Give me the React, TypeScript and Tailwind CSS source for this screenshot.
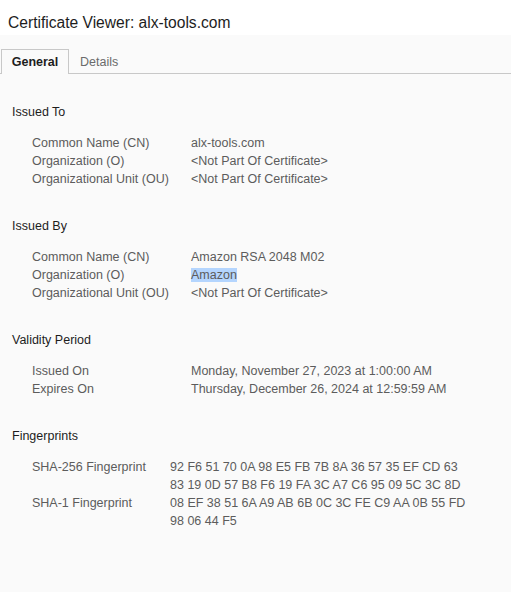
const rowsTo = [
  ['Common Name (CN)', 'alx-tools.com'],
  ['Organization (O)', '<Not Part Of Certificate>'],
  ['Organizational Unit (OU)', '<Not Part Of Certificate>'],
];

const Section = ({ title, children }: { title: string; children: React.ReactNode }) => (
  <div className="mb-[29px]">
    <div className="h-[18px] leading-[18px] text-[#1d1d1d]">{title}</div>
    <div className="mt-[13px] pl-[20px]">{children}</div>
  </div>
);

const Row = ({ label, children, wide = true }: { label: string; children: React.ReactNode; wide?: boolean }) => (
  <div className="flex leading-[18px] text-[#5c5c5c]">
    <div className={wide ? 'w-[159px] shrink-0' : 'w-[138px] shrink-0'}>{label}</div>
    <div>{children}</div>
  </div>
);

const App = () => {
  return (
    <div className="w-[511px] h-[592px] bg-[#fafafa] text-[12.5px]" style={{ fontFamily: '"Liberation Sans", Arial, sans-serif' }}>
      {/* Title */}
      <div className="h-[35px] bg-white px-[8px] pt-[14px] text-[15.6px] leading-[18px] text-[#1d1d1d]">
        Certificate Viewer: alx-tools.com
      </div>

      {/* Tabs */}
      <div className="flex items-end h-[39px] border-b border-[#c8c8c8] pl-[1px]">
        <div className="h-[25px] w-[68px] -mb-px border border-b-0 border-[#c8c8c8] bg-[#fafafa] flex items-center justify-center font-bold text-[#1d1d1d]">
          General
        </div>
        <div className="h-[25px] -mb-px border border-b-0 border-transparent px-[10px] flex items-center text-[#6b6b6b]">
          Details
        </div>
      </div>

      <div className="px-[12px] pt-[29px]">
        <Section title="Issued To">
          {rowsTo.map(([l, v]) => (
            <Row key={l} label={l}>{v}</Row>
          ))}
        </Section>

        <Section title="Issued By">
          <Row label="Common Name (CN)">Amazon RSA 2048 M02</Row>
          <Row label="Organization (O)">
            <span className="bg-[#b4d5fe]">Amazon</span>
          </Row>
          <Row label="Organizational Unit (OU)">{'<Not Part Of Certificate>'}</Row>
        </Section>

        <Section title="Validity Period">
          <Row label="Issued On">Monday, November 27, 2023 at 1:00:00 AM</Row>
          <Row label="Expires On">Thursday, December 26, 2024 at 12:59:59 AM</Row>
        </Section>

        <Section title="Fingerprints">
          <Row label="SHA-256 Fingerprint" wide={false}>
            <div>92 F6 51 70 0A 98 E5 FB 7B 8A 36 57 35 EF CD 63</div>
            <div>83 19 0D 57 B8 F6 19 FA 3C A7 C6 95 09 5C 3C 8D</div>
          </Row>
          <Row label="SHA-1 Fingerprint" wide={false}>
            <div>08 EF 38 51 6A A9 AB 6B 0C 3C FE C9 AA 0B 55 FD</div>
            <div>98 06 44 F5</div>
          </Row>
        </Section>
      </div>
    </div>
  );
};

export default App;
